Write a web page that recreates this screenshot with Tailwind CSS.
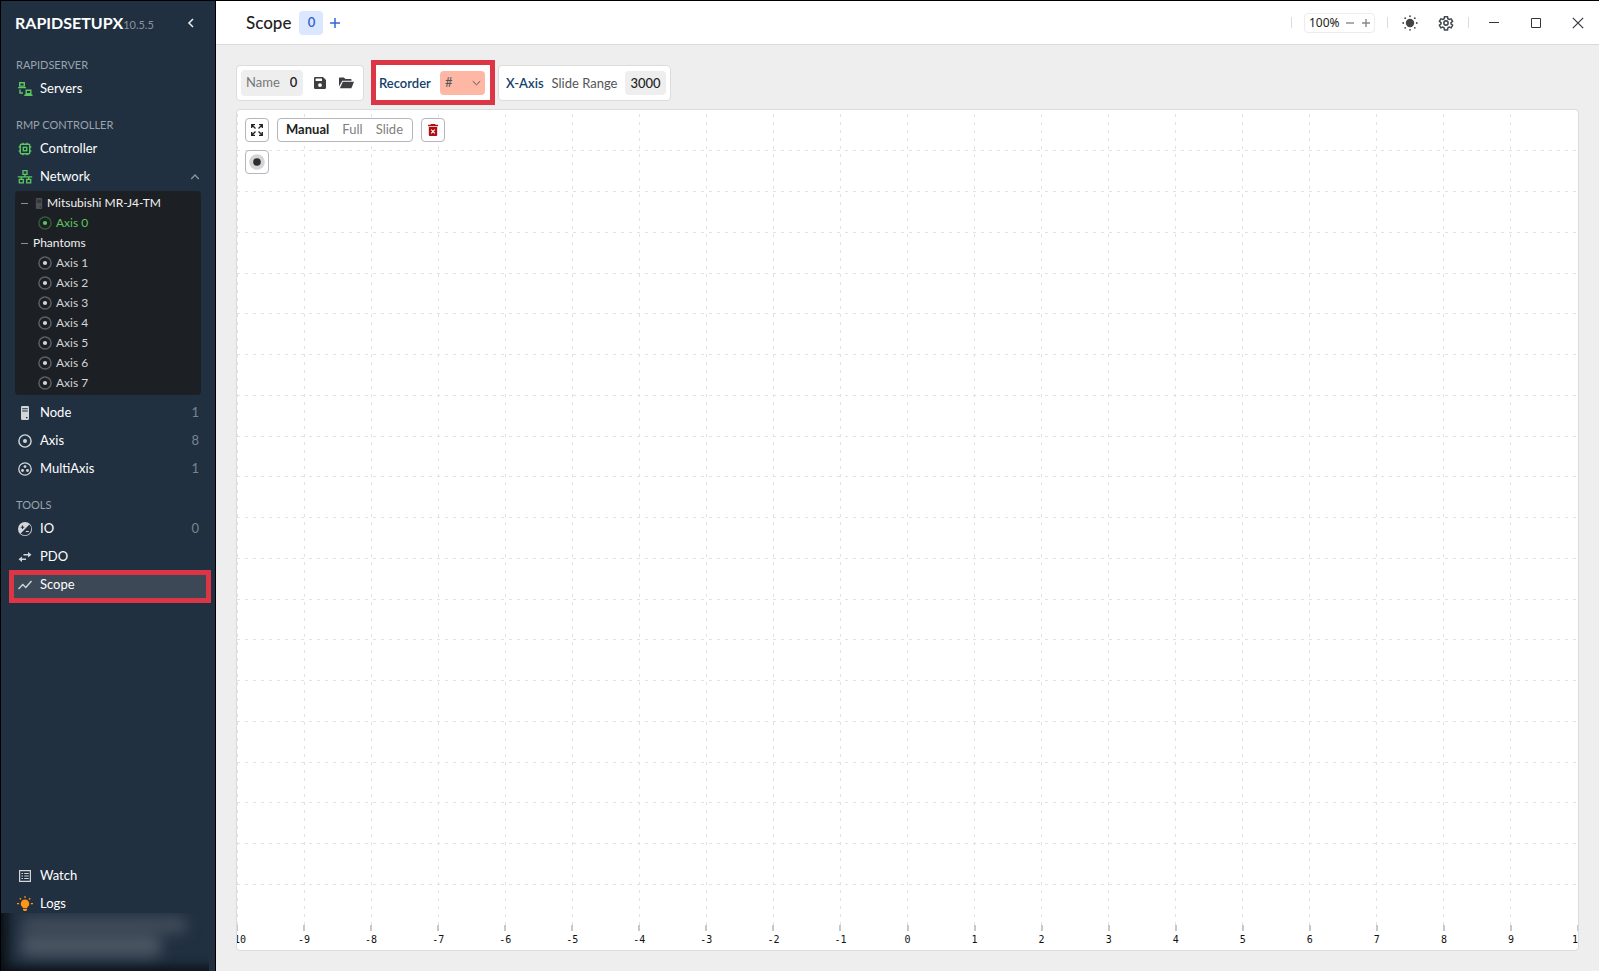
<!DOCTYPE html>
<html lang="en">
<head>
<meta charset="utf-8">
<title>RapidSetupX - Scope</title>
<meta name="viewport" content="width=device-width, initial-scale=1">
<script src="https://cdn.jsdelivr.net/npm/@tailwindcss/browser@4"></script>
</head>
<body class="flex h-screen overflow-hidden border-t border-black bg-[#eeeeee] font-[Lato,'Noto_Sans',sans-serif] text-[#222]">

<svg class="hidden" aria-hidden="true">
  <symbol id="axis" viewBox="0 0 14 14"><circle cx="7" cy="7" r="6.1" fill="none" stroke="currentColor" stroke-width="1.4"/><circle cx="7" cy="7" r="2" fill="currentColor"/></symbol>
  <symbol id="axis-dim" viewBox="0 0 14 14"><circle cx="7" cy="7" r="6.1" fill="none" stroke="currentColor" stroke-opacity=".35" stroke-width="1.5"/><circle cx="7" cy="7" r="2.1" fill="currentColor"/></symbol>
  <symbol id="server" viewBox="0 0 10 14"><path fill="currentColor" fill-rule="evenodd" d="M2.300 0h5.400A1.300 1.300 0 0 1 9 1.300v11.400A1.300 1.300 0 0 1 7.700 14H2.300A1.300 1.300 0 0 1 1 12.700V1.300A1.300 1.300 0 0 1 2.300 0zM2.200 2.300v1h5.600v-1zM2.200 4.600v1h5.600v-1zM6 11v1.200h1.500V11z"/></symbol>
</svg>

<aside class="flex w-[216px] shrink-0 flex-col border-x border-black bg-[#213040] text-white">
  <div class="flex h-[43px] items-center pr-[18px] pl-[14px]">
    <h1 class="text-[16px] font-bold leading-5">RAPIDSETUPX</h1>
    <span class="pt-1 text-[11px] leading-4 text-[#8a949e]">10.5.5</span>
    <button aria-label="Collapse sidebar" class="ml-auto flex h-5 w-3 items-center justify-center text-[#e5e7ea]">
      <svg class="h-2.5 w-2" viewBox="0 0 8 10" fill="none" stroke="currentColor" stroke-width="1.6"><path d="M6 1 2 5l4 4"/></svg>
    </button>
  </div>

  <nav class="flex flex-1 flex-col text-[13px]">
    <h2 class="mt-[13px] h-4 pl-[15px] text-[11px] leading-4 text-[#9aa3ac]">RAPIDSERVER</h2>
    <a href="#" class="mt-[2px] flex h-7 items-center gap-[7px] px-[16px]">
      <svg class="size-4 text-[#5cc761]" viewBox="0 0 16 16" fill="none" stroke="currentColor" stroke-width="1.4"><path d="M2.700 1.700h4.600v3.400H2.700zM1 6.600h8M9.200 9.300h4.600v3.400H9.200zM7.300 14.300h8.200M3 8.500v3.500h3"/></svg>
      Servers</a>

    <h2 class="mt-[14px] h-4 pl-[15px] text-[11px] leading-4 text-[#9aa3ac]">RMP CONTROLLER</h2>
    <a href="#" class="mt-[2px] flex h-7 items-center gap-[7px] px-[16px]">
      <svg class="size-4 text-[#5cc761]" viewBox="0 0 16 16" fill="none" stroke="currentColor" stroke-width="1.4"><rect x="3.300" y="3.300" width="9.400" height="9.400" rx="1"/><rect x="6.300" y="6.300" width="3.400" height="3.400"/><path d="M6 1.700v2M10 1.700v2M6 12.300v2M10 12.300v2M1.700 6h2M1.700 10h2M12.300 6h2M12.300 10h2"/></svg>
      Controller</a>
    <a href="#" class="flex h-7 items-center gap-[7px] pl-[16px] pr-[15px]">
      <svg class="size-4 text-[#5cc761]" viewBox="0 0 16 16" fill="none" stroke="currentColor" stroke-width="1.300"><path d="M6 1.700h4v3.600H6zM2.300 10.300h4v3.600h-4zM9.700 10.300h4v3.600h-4zM8 5.300v2.500M.8 7.800h14.400M4.300 7.800v2.500M11.700 7.800v2.500"/></svg>
      Network
      <svg class="ml-auto h-2 w-2.5 text-[#8d969f]" viewBox="0 0 10 8" fill="none" stroke="currentColor" stroke-width="1.300"><path d="M1.200 6 5 2l3.800 4"/></svg></a>

    <ul class="mx-[14px] rounded-sm bg-[#1c1f23] py-[2px] text-[12px] leading-5 text-[#d4d6d8]">
      <li class="flex h-5 items-center pl-1.5 text-[#f1f1f1]"><span class="h-px w-[7px] bg-[#8c8f92]"></span><svg class="ml-[7px] mr-1 h-[11px] w-2 text-[#4c5054]"><use href="#server"/></svg>Mitsubishi MR-J4-TM</li>
      <li class="flex h-5 items-center gap-1 pl-[23px] text-[#5cc761]"><svg class="size-[14px]"><use href="#axis-dim"/></svg>Axis 0</li>
      <li class="flex h-5 items-center pl-1.5 text-[#f1f1f1]"><span class="mr-[5px] h-px w-[7px] bg-[#8c8f92]"></span>Phantoms</li>
      <li class="flex h-5 items-center gap-1 pl-[23px]"><svg class="size-[14px]"><use href="#axis-dim"/></svg>Axis 1</li>
      <li class="flex h-5 items-center gap-1 pl-[23px]"><svg class="size-[14px]"><use href="#axis-dim"/></svg>Axis 2</li>
      <li class="flex h-5 items-center gap-1 pl-[23px]"><svg class="size-[14px]"><use href="#axis-dim"/></svg>Axis 3</li>
      <li class="flex h-5 items-center gap-1 pl-[23px]"><svg class="size-[14px]"><use href="#axis-dim"/></svg>Axis 4</li>
      <li class="flex h-5 items-center gap-1 pl-[23px]"><svg class="size-[14px]"><use href="#axis-dim"/></svg>Axis 5</li>
      <li class="flex h-5 items-center gap-1 pl-[23px]"><svg class="size-[14px]"><use href="#axis-dim"/></svg>Axis 6</li>
      <li class="flex h-5 items-center gap-1 pl-[23px]"><svg class="size-[14px]"><use href="#axis-dim"/></svg>Axis 7</li>
    </ul>

    <a href="#" class="mt-1 flex h-7 items-center gap-[7px] px-[16px]">
      <span class="flex w-4 justify-center"><svg class="h-[14px] w-2.5 text-[#d3d6d9]"><use href="#server"/></svg></span>Node<span class="ml-auto text-[#7a8590]">1</span></a>
    <a href="#" class="flex h-7 items-center gap-[7px] px-[16px]">
      <span class="flex w-4 justify-center"><svg class="size-[14px] text-[#d3d6d9]"><use href="#axis"/></svg></span>Axis<span class="ml-auto text-[#7a8590]">8</span></a>
    <a href="#" class="flex h-7 items-center gap-[7px] px-[16px]">
      <span class="flex w-4 justify-center"><svg class="size-[14px] text-[#d3d6d9]" viewBox="0 0 14 14"><circle cx="7" cy="7" r="6.200" fill="none" stroke="currentColor" stroke-width="1.300"/><g fill="currentColor"><circle cx="7" cy="4.600" r="1.400"/><circle cx="4.500" cy="8.500" r="1.400"/><circle cx="9.500" cy="8.500" r="1.400"/></g></svg></span>MultiAxis<span class="ml-auto text-[#7a8590]">1</span></a>

    <h2 class="mt-[14px] h-4 pl-[15px] text-[11px] leading-4 text-[#9aa3ac]">TOOLS</h2>
    <a href="#" class="mt-[2px] flex h-7 items-center gap-[7px] px-[16px]">
      <span class="flex w-4 justify-center"><svg class="size-[14px]" viewBox="0 0 14 14"><circle cx="7" cy="7" r="7" fill="#d3d6d9"/><path d="M11.400 2.600A6 6 0 0 1 2.600 11.400z" fill="#213040"/><path d="M2.800 5.200h3.400M4.500 3.500v3.400" stroke="#213040" stroke-width="1.100"/><path d="M7.800 9.500h3" stroke="#d3d6d9" stroke-width="1.100"/></svg></span>IO<span class="ml-auto text-[#7a8590]">0</span></a>
    <a href="#" class="flex h-7 items-center gap-[7px] px-[16px]">
      <svg class="size-4" viewBox="0 0 16 16" fill="#d3d6d9"><path d="M6.500 5.100h4.500V3L14.500 5.800 11 8.600V6.500H6.500zM9 9.500H5V7.400L1.500 10.200 5 13V10.900H9z"/></svg>PDO</a>
    <a href="#" aria-current="page" class="-mt-px ml-2 mr-1 flex h-[33px] items-center gap-[7px] border-5 border-[#dc3545] bg-[#3d4856] pb-[3px] pl-[3px]">
      <svg class="size-4" viewBox="0 0 16 16" fill="none" stroke="#d3d6d9" stroke-width="1.400"><path d="m1.500 12 4.300-4.500 3 3L14.500 4"/></svg>Scope</a>

    <a href="#" class="mt-auto flex h-7 items-center gap-[7px] px-[16px]">
      <svg class="size-4" viewBox="0 0 16 16" fill="none" stroke="#d3d6d9" stroke-width="1.200"><path d="M2.600 2.600h10.800v10.800H2.600zM4.500 5.500H6M7.200 5.500h4.500M4.500 8H6M7.200 8h4.500M4.500 10.500H6M7.200 10.500h4.500"/></svg>Watch</a>
    <a href="#" class="flex h-7 items-center gap-[7px] px-[16px]">
      <svg class="size-4" viewBox="0 0 16 16" fill="#ff9418"><path d="M8 3.500a4.200 4.200 0 0 1 2.300 7.700V12H5.700v-.8A4.200 4.200 0 0 1 8 3.500zM6 12.700h4v1.200L9 15H7l-1-1.100zM7.400 0h1.200v2H7.400zM2.300 2.600l.9-.9 1.300 1.300-.9.9zM13.700 2.600l-.9-.9-1.300 1.300.9.9zM0 7h2.200v1.200H0zM13.800 7H16v1.200h-2.200z"/></svg>Logs</a>
  </nav>
  <div aria-hidden="true" class="-mt-[5px] mr-1.5 h-[58px] overflow-hidden bg-[#213040] px-5 pt-1 shadow-[inset_12px_-10px_12px_-6px_#0a0e13]">
    <div class="h-4 w-[166px] rounded-lg bg-[#434e5b] blur-[7px]"></div>
    <div class="h-6 w-[140px] rounded-lg bg-[#4a5562] blur-[7px]"></div>
  </div>
</aside>

<div class="flex min-w-0 flex-1 flex-col">
  <header class="flex h-11 shrink-0 items-center border-b border-[#dadada] bg-white pl-[30px] pr-[15px]">
    <h2 class="text-[17px] font-medium">Scope</h2>
    <button class="ml-2 size-6 rounded-sm bg-[#dbe7fe] text-[13px] font-semibold text-[#2f62d0]">0</button>
    <button aria-label="Add scope" class="ml-[7px]"><svg class="size-2.5" viewBox="0 0 10 10" stroke="#3168d8" stroke-width="1.500"><path d="M5 0v10M0 5h10"/></svg></button>
    <div class="ml-auto flex items-center">
      <span class="h-[11px] w-px bg-[#dcdcdc]"></span>
      <div class="ml-3 flex h-5 w-[71px] items-center rounded-sm border border-[#ececec] pl-1 text-[#888]">
        <span class="w-[37px] font-['Noto_Sans',sans-serif] text-[12px] text-[#222]">100%</span>
        <button aria-label="Zoom out"><svg class="size-2" viewBox="0 0 8 8" stroke="currentColor" stroke-width="1.400"><path d="M0 4h8"/></svg></button>
        <button aria-label="Zoom in" class="ml-2"><svg class="size-2" viewBox="0 0 8 8" stroke="currentColor" stroke-width="1.400"><path d="M0 4h8M4 0v8"/></svg></button>
      </div>
      <span class="ml-3 h-[11px] w-px bg-[#dcdcdc]"></span>
      <button aria-label="Theme" class="ml-3.5"><svg class="size-4" viewBox="0 0 16 16" fill="#444"><circle cx="8" cy="8" r="4.200"/><circle cx="8" cy="1.200" r=".9"/><circle cx="8" cy="14.800" r=".9"/><circle cx="1.200" cy="8" r=".9"/><circle cx="14.800" cy="8" r=".9"/><circle cx="3.200" cy="3.200" r=".9"/><circle cx="12.800" cy="3.200" r=".9"/><circle cx="3.200" cy="12.800" r=".9"/><circle cx="12.800" cy="12.800" r=".9"/></svg></button>
      <button aria-label="Settings" class="ml-5"><svg class="size-4" viewBox="0 0 24 24" fill="none" stroke="#444a52" stroke-width="2.300"><circle cx="12" cy="12" r="3.200"/><path d="M9.800 2.500h4.400l.6 3.100 1.900 1.100 3-1 2.200 3.800-2.400 2v1.900l2.400 2-2.200 3.800-3-1-1.900 1.100-.6 3.100H9.800l-.6-3.100-1.900-1.100-3 1-2.200-3.800 2.400-2v-1.900l-2.400-2 2.200-3.800 3 1 1.900-1.100z"/></svg></button>
      <span class="ml-3.5 h-[11px] w-px bg-[#dcdcdc]"></span>
      <button aria-label="Minimize" class="ml-5"><svg class="size-2.5" viewBox="0 0 10 10" stroke="#33363f"><path d="M0 4.500h10"/></svg></button>
      <button aria-label="Maximize" class="ml-8"><svg class="size-2.5" viewBox="0 0 10 10" fill="none" stroke="#33363f"><path d="M.5.5h9v9h-9z"/></svg></button>
      <button aria-label="Close" class="ml-[31px]"><svg class="size-3" viewBox="0 0 12 12" stroke="#33363f" stroke-width="1.200"><path d="m.8.8 10.400 10.400M11.200.8.8 11.200"/></svg></button>
    </div>
  </header>

  <main class="flex min-h-0 flex-1 flex-col px-5 pt-[15px] pb-5">
    <div class="flex h-[45px] shrink-0 items-center text-[13px]">
      <div class="flex h-9 w-[128px] items-center rounded-sm border border-[#dcdcdc] bg-white pl-1">
        <label class="flex h-[26px] w-[62px] items-center rounded-sm bg-[#eeeeee] pl-[5px] text-[#777]">Name<input value="0" class="ml-2.5 w-3 font-semibold text-[#222] outline-none"></label>
        <button aria-label="Save" class="ml-[11px]"><svg class="size-3" viewBox="0 0 12 12"><path fill="#3d3f42" fill-rule="evenodd" d="M1.300 0H9l3 3v7.700A1.300 1.300 0 0 1 10.700 12H1.300A1.300 1.300 0 0 1 0 10.700V1.300A1.300 1.300 0 0 1 1.300 0zM1.600 1.500V4H8V1.500zM6 6.200a1.900 1.900 0 1 0 0 3.800 1.900 1.900 0 0 0 0-3.800z"/></svg></button>
        <button aria-label="Open" class="ml-[13px]"><svg class="h-3 w-[15px]" viewBox="0 0 15 12" fill="#3d3f42"><path d="M0 1.200Q0 .5.700.5h4.200l1.500 1.500h5.400q.7 0 .7.700v1H3.300L0 9.500z"/><path d="M3.800 4.700H15l-2.600 6.600H.9z"/></svg></button>
      </div>
      <div class="ml-[7px] flex h-[45px] w-[124px] items-center border-5 border-[#dc3545] bg-white pl-[3px] pr-[5px]">
        <label for="recorder" class="pt-0.5 font-semibold text-[#123f6b]">Recorder</label>
        <div class="relative ml-auto flex h-6 w-[45px] items-center rounded-sm bg-[#feb7a5]">
          <select id="recorder" class="h-6 w-full appearance-none pl-[5px] text-[#555]"><option>#</option></select>
          <svg class="pointer-events-none absolute right-1 top-2 h-2 w-[9px]" viewBox="0 0 9 8" fill="none" stroke="#555"><path d="m.8 2.200 3.700 3.600 3.700-3.600"/></svg>
        </div>
      </div>
      <div class="ml-[3px] flex h-9 w-[173px] items-center rounded-sm border border-[#dcdcdc] bg-white pl-[7px] pr-1">
        <span class="pt-0.5 font-semibold text-[#123f6b]">X-Axis</span>
        <label for="range" class="ml-2 pt-0.5 text-[#555]">Slide Range</label>
        <input id="range" value="3000" class="ml-auto h-6 w-[41px] rounded-sm bg-[#eeeeee] text-center font-medium text-[#222] outline-none">
      </div>
    </div>

    <section class="relative mt-1 flex min-h-0 flex-1 flex-col overflow-hidden rounded-sm border border-[#dcdcdc] bg-white">
      <svg id="plot" class="min-h-0 w-full flex-1" role="img" aria-label="Scope plot grid"></svg>
      <svg id="ticks" class="h-[25px] w-full shrink-0 font-['DejaVu_Sans_Mono',monospace] text-[10px]"></svg>
      <div class="absolute left-2 top-2 flex flex-col gap-2">
        <div class="flex h-6 gap-2 text-[13px]">
          <button aria-label="Fit" class="flex size-6 items-center justify-center rounded-sm border border-[#b5b5ba] bg-white"><svg class="size-3" viewBox="0 0 12 12" fill="none" stroke="#222" stroke-width="1.300"><path d="M4 .7H.7V4M8 .7h3.300V4M4 11.300H.7V8M8 11.300h3.300V8M.7.7l3.800 3.800M11.300.7 7.500 4.500M.7 11.300l3.800-3.800M11.300 11.300 7.500 7.500"/></svg></button>
          <div class="flex w-[136px] items-center justify-between rounded-sm border border-[#b5b5ba] bg-white pl-2 pr-[9px] text-[#808080]">
            <button class="font-bold text-[#222]">Manual</button><button>Full</button><button>Slide</button>
          </div>
          <button aria-label="Delete" class="flex size-6 items-center justify-center rounded-sm border border-[#b5b5ba] bg-white"><svg class="h-3 w-2.5" viewBox="0 0 10 12"><path fill="#b01010" d="M3 0h4l.6.800H10v1.400H0V.8h2.400zM.8 3h8.400v8q0 1-1 1H1.800q-1 0-1-1z"/><path d="m3.200 5.700 3.600 3.600M6.800 5.700 3.200 9.300" stroke="#fff" stroke-width="1.200"/></svg></button>
        </div>
        <button aria-label="Record" class="flex size-6 items-center justify-center rounded-sm border border-[#b5b5ba] bg-white"><svg class="size-4" viewBox="0 0 16 16"><circle cx="8" cy="8" r="7.800" fill="#d4d4d4"/><circle cx="8" cy="8" r="3.800" fill="#2b2d33"/></svg></button>
      </div>
    </section>
  </main>
</div>

<script>
  const NS = 'http://www.w3.org/2000/svg';
  const plot = document.getElementById('plot');
  const ticks = document.getElementById('ticks');
  function add(parent, tag, attrs, text) {
    const el = document.createElementNS(NS, tag);
    for (const k in attrs) el.setAttribute(k, attrs[k]);
    if (text !== undefined) el.textContent = text;
    parent.appendChild(el);
  }
  for (let i = 0; i <= 20; i++) {
    const p = i * 5 + '%';
    const grid = { stroke: '#e2e2e2', 'stroke-dasharray': '3 5', 'shape-rendering': 'crispEdges' };
    add(plot, 'line', { x1: p, x2: p, y1: 4, y2: '100%', ...grid });
    if (i > 0) add(plot, 'line', { x1: 0, x2: '100%', y1: p, y2: p, ...grid });
    add(ticks, 'line', { x1: p, x2: p, y1: 0, y2: 6, stroke: '#c8c8c8', 'stroke-width': 2, 'shape-rendering': 'crispEdges' });
    add(ticks, 'text', { x: p, y: 18, 'text-anchor': 'middle', fill: '#111' }, String(i - 10));
  }
</script>
</body>
</html>
